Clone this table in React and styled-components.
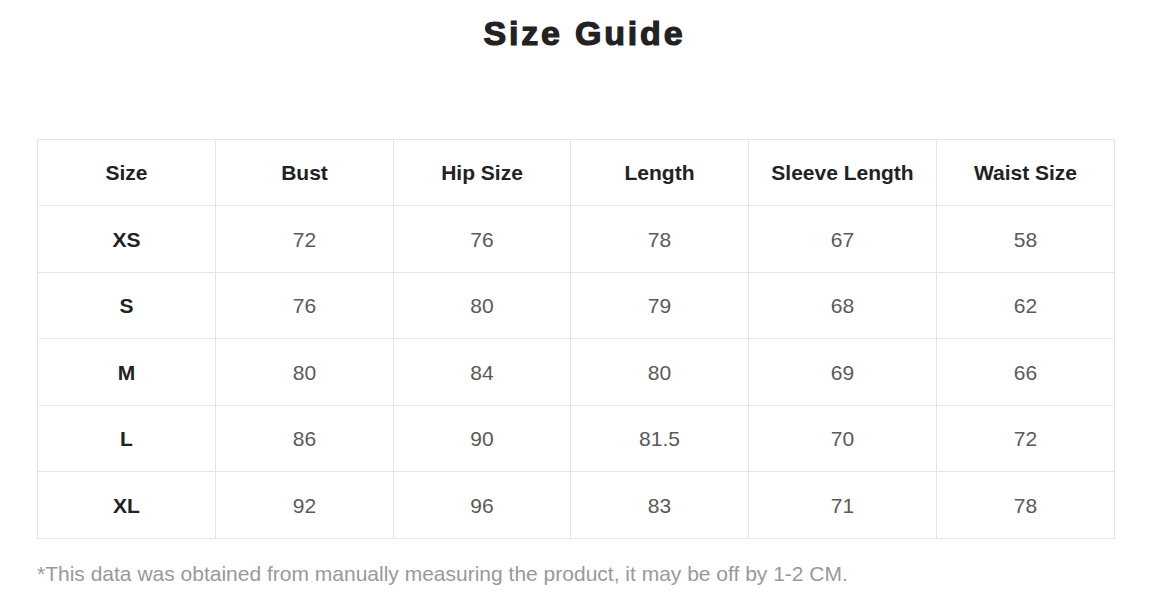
import styled, { createGlobalStyle } from 'styled-components';

const GlobalStyle = createGlobalStyle`
  body {
    margin: 0;
    background: #fff;
    font-family: "Liberation Sans", Arial, sans-serif;
  }
`;

const Page = styled.div`
  width: 1153px;
  padding-left: 37px;
  box-sizing: border-box;
`;

const Title = styled.h1`
  margin: 13px 0 0 -37px;
  padding-left: 16px;
  width: 1153px;
  box-sizing: border-box;
  text-align: center;
  font-size: 34px;
  line-height: 40px;
  font-weight: 700;
  letter-spacing: 2.8px;
  color: #222;
  -webkit-text-stroke: 1.2px #222;
`;

const Grid = styled.div`
  margin-top: 86px;
  display: grid;
  grid-template-columns: 178px 178px 177px 178px 188px 178px;
  grid-template-rows: 66px 67px 66px 67px 66px 67px;
  width: 1078px;
  box-sizing: border-box;
  border-top: 1px solid #e4e4e4;
  border-left: 1px solid #e4e4e4;
`;

const Cell = styled.div`
  display: flex;
  align-items: center;
  justify-content: center;
  padding-top: 1px;
  box-sizing: border-box;
  border-right: 1px solid #e4e4e4;
  border-bottom: 1px solid #e4e4e4;
  font-size: 21px;
  font-weight: ${p => (p.$strong ? 700 : 400)};
  color: ${p => (p.$strong ? '#222' : '#5a5a5a')};
`;

const Note = styled.p`
  margin: 23px 0 0;
  font-size: 21px;
  line-height: 24px;
  color: #999;
`;

const headers = ['Size', 'Bust', 'Hip Size', 'Length', 'Sleeve Length', 'Waist Size'];

const rows = [
  ['XS', '72', '76', '78', '67', '58'],
  ['S', '76', '80', '79', '68', '62'],
  ['M', '80', '84', '80', '69', '66'],
  ['L', '86', '90', '81.5', '70', '72'],
  ['XL', '92', '96', '83', '71', '78'],
];

export default function App() {
  return (
    <Page>
      <GlobalStyle />
      <Title>Size Guide</Title>
      <Grid>
        {headers.map(h => (
          <Cell key={h} $strong>
            {h}
          </Cell>
        ))}
        {rows.map(row =>
          row.map((v, i) => (
            <Cell key={row[0] + i} $strong={i === 0}>
              {v}
            </Cell>
          ))
        )}
      </Grid>
      <Note>*This data was obtained from manually measuring the product, it may be off by 1-2 CM.</Note>
    </Page>
  );
}
